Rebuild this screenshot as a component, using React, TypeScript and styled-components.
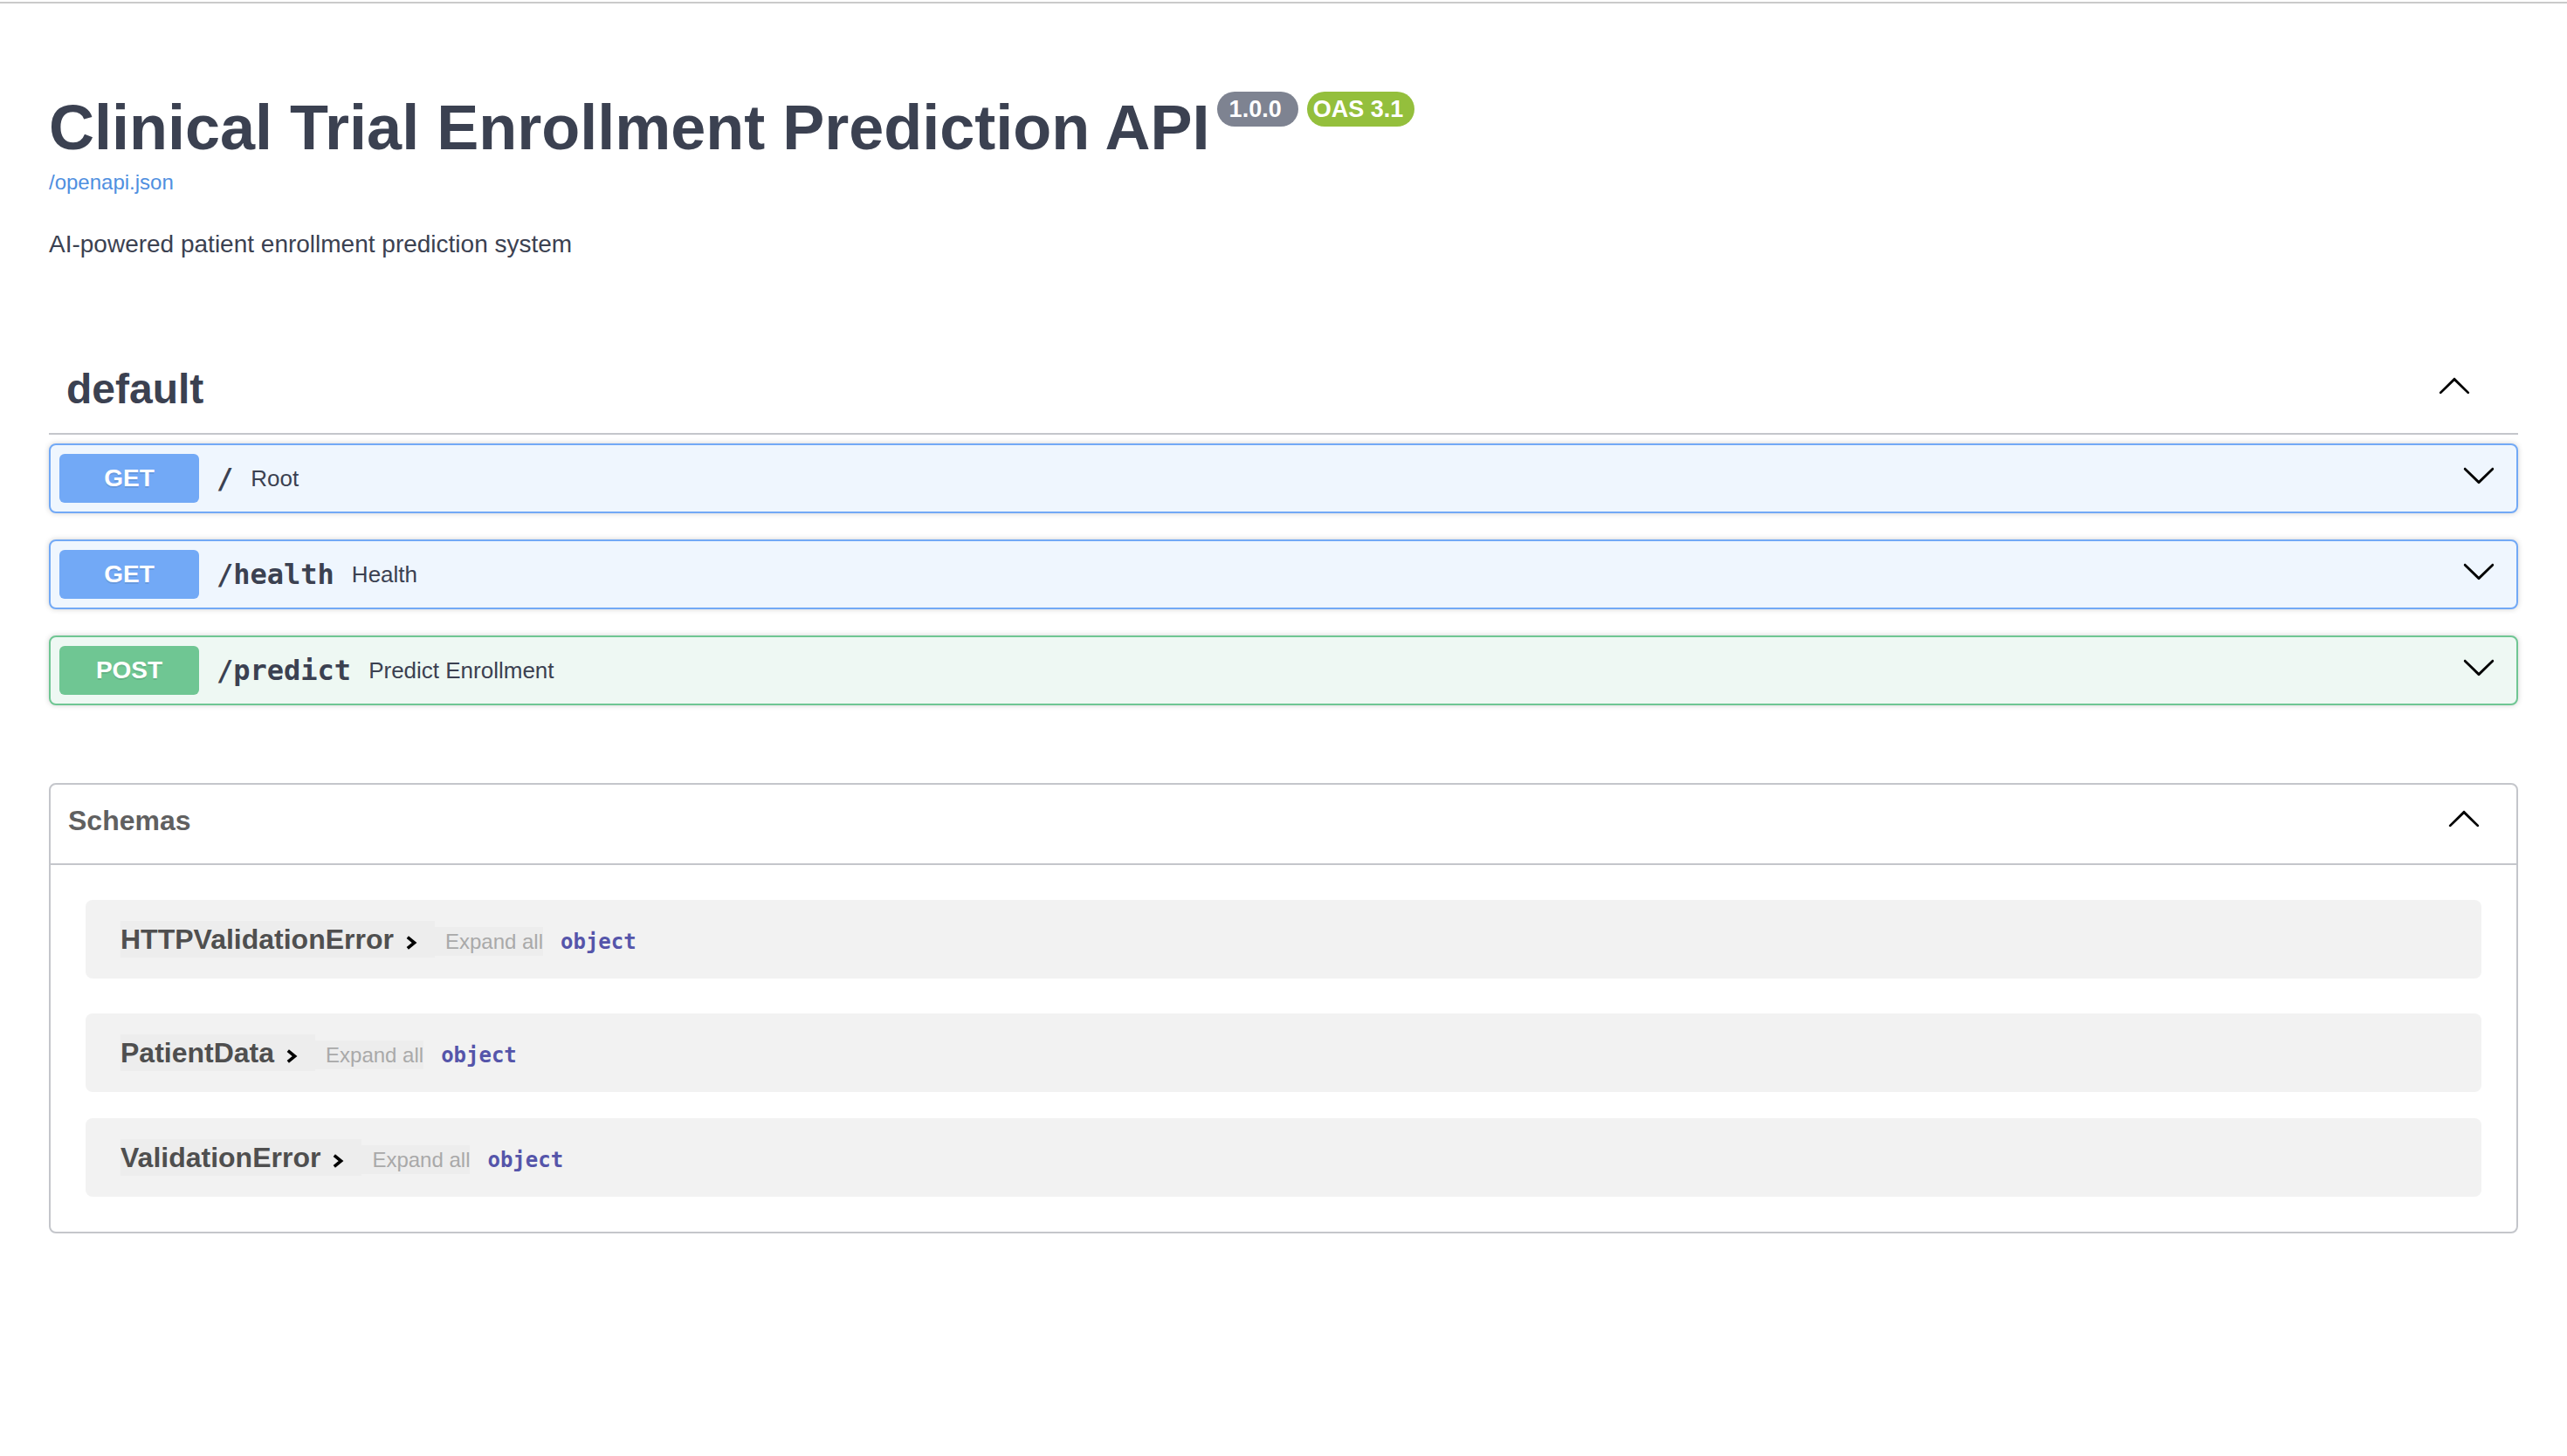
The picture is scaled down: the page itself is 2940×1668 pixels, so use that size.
import React from "react";
import styled, { createGlobalStyle } from "styled-components";

const SANS = `"Liberation Sans", Arial, Helvetica, sans-serif`;
const MONO = `"DejaVu Sans Mono", "Liberation Mono", monospace`;

const GlobalStyle = createGlobalStyle`
  html, body { margin: 0; padding: 0; background: #ffffff; }
  body { font-family: ${SANS}; color: #3b4151; }
  *, *::before, *::after { box-sizing: border-box; }
`;

type Method = "get" | "post";

const methodColors: Record<Method, { main: string; bg: string }> = {
  get: { main: "#72a9f6", bg: "#eff6fe" },
  post: { main: "#6fc693", bg: "#eef8f3" },
};

const TopRule = styled.div`
  margin-top: 2px;
  height: 2px;
  background: #cacaca;
`;

const Wrapper = styled.main`
  padding: 0 56px 200px;
`;

const Info = styled.header`
  margin-top: 106px;
`;

const TitleRow = styled.div`
  display: flex;
  align-items: flex-start;
`;

const Title = styled.h1`
  margin: 0;
  font: bold 72px/72px ${SANS};
  color: #3b4151;
  white-space: nowrap;
`;

const Badge = styled.span<{ $tone: "version" | "oas" }>`
  display: inline-block;
  margin-top: -5px;
  margin-left: ${(p) => (p.$tone === "version" ? "8px" : "10px")};
  height: 40px;
  padding: ${(p) => (p.$tone === "version" ? "0 19px 0 14px" : "0 13px 0 7px")};
  border-radius: 20px;
  background: ${(p) => (p.$tone === "version" ? "#7e8391" : "#94bf3c")};
  color: #ffffff;
  font: bold 27px/40px ${SANS};
  white-space: nowrap;
`;

const SpecLink = styled.a`
  display: block;
  margin-top: 13px;
  font: 24px/28px ${SANS};
  color: #4f8fe0;
  text-decoration: none;
  width: max-content;
`;

const Description = styled.p`
  margin: 37px 0 0;
  font: 28px/40px ${SANS};
  color: #3b4151;
`;

const TagSection = styled.section`
  margin-top: 108px;
`;

const TagHeader = styled.div`
  display: flex;
  align-items: flex-start;
  padding: 10px 53px 22px 20px;
  border-bottom: 2px solid #c4c6cb;
  margin-bottom: 10px;
`;

const TagTitle = styled.h2`
  flex: 1;
  margin: 0;
  font: bold 48px/56px ${SANS};
  color: #3b4151;
`;

const ArrowIcon = styled.svg<{ $offset: number }>`
  flex-shrink: 0;
  width: 40px;
  height: 40px;
  margin-top: ${(p) => p.$offset}px;
`;

const OpBlock = styled.div<{ $method: Method }>`
  display: flex;
  align-items: center;
  height: 80px;
  padding: 0 23px 0 10px;
  margin-bottom: 30px;
  border: 2px solid ${(p) => methodColors[p.$method].main};
  border-radius: 8px;
  background: ${(p) => methodColors[p.$method].bg};
  box-shadow: 0 0 6px rgba(0, 0, 0, 0.19);
  &:last-child {
    margin-bottom: 0;
  }
`;

const MethodTag = styled.span<{ $method: Method }>`
  flex-shrink: 0;
  width: 160px;
  height: 56px;
  border-radius: 6px;
  background: ${(p) => methodColors[p.$method].main};
  color: #ffffff;
  font: bold 28px/56px ${SANS};
  text-align: center;
  text-shadow: 0 2px 0 rgba(0, 0, 0, 0.1);
`;

const OpPath = styled.span`
  padding: 0 20px;
  font: bold 32px/40px ${MONO};
  color: #3b4151;
  white-space: nowrap;
`;

const OpSummary = styled.span`
  flex: 1;
  font: 26px/40px ${SANS};
  color: #3b4151;
`;

const OpArrow = styled.svg`
  flex-shrink: 0;
  width: 40px;
  height: 40px;
  margin-bottom: 9px;
`;

const Models = styled.section`
  margin-top: 89px;
  border: 2px solid #c4c6cb;
  border-radius: 8px;
`;

const ModelsHeader = styled.div`
  display: flex;
  align-items: flex-start;
  padding: 21px 40px 29px 20px;
  border-bottom: 2px solid #c4c6cb;
`;

const ModelsTitle = styled.h4`
  flex: 1;
  margin: 0;
  font: bold 32px/40px ${SANS};
  color: #606060;
`;

const ModelList = styled.div`
  padding: 40px;
`;

const ModelContainer = styled.div<{ $first?: boolean }>`
  display: flex;
  align-items: baseline;
  padding: 24px 40px;
  margin-bottom: ${(p) => (p.$first ? "40px" : "30px")};
  border-radius: 8px;
  background: #f2f2f2;
  &:last-child {
    margin-bottom: 0;
  }
`;

const ModelTitleButton = styled.button`
  display: inline-flex;
  align-items: flex-start;
  height: 42px;
  padding: 0;
  border: none;
  background: #ededed;
  font: bold 32px/42px ${SANS};
  color: #4f4f4f;
  cursor: pointer;
`;

const ModelChevron = styled.svg`
  flex-shrink: 0;
  width: 12px;
  height: 16px;
  margin: 17px 21px 0 14px;
  overflow: visible;
`;

const ExpandButton = styled.button`
  height: 33px;
  padding: 0 0 0 12px;
  border: none;
  background: #ededed;
  font: 24px/33px ${SANS};
  color: #a9a9a9;
  cursor: pointer;
`;

const TypeLabel = styled.span`
  margin-left: 20px;
  font: bold 24px/33px ${MONO};
  color: #5555aa;
`;

const DOWN_PATH =
  "M17.418 6.109c.272-.268.709-.268.979 0s.271.701 0 .969l-7.908 7.83c-.27.268-.707.268-.979 0l-7.908-7.83c-.27-.268-.27-.701 0-.969.271-.268.709-.268.979 0L10 13.25l7.418-7.141z";
const UP_PATH =
  "M17.418 14.908c.272.268.709.268.979 0s.271-.701 0-.969l-7.908-7.83c-.27-.268-.707-.268-.979 0l-7.908 7.83c-.27.268-.27.701 0 .969.271.268.709.268.979 0L10 7.767l7.418 7.141z";

const operations: { method: Method; label: string; path: string; summary: string }[] = [
  { method: "get", label: "GET", path: "/", summary: "Root" },
  { method: "get", label: "GET", path: "/health", summary: "Health" },
  { method: "post", label: "POST", path: "/predict", summary: "Predict Enrollment" },
];

const schemas = ["HTTPValidationError", "PatientData", "ValidationError"];

export default function App() {
  return (
    <>
      <GlobalStyle />
      <TopRule />
      <Wrapper>
        <Info>
          <TitleRow>
            <Title>Clinical Trial Enrollment Prediction API</Title>
            <Badge $tone="version">1.0.0</Badge>
            <Badge $tone="oas">OAS 3.1</Badge>
          </TitleRow>
          <SpecLink href="#">/openapi.json</SpecLink>
          <Description>AI-powered patient enrollment prediction system</Description>
        </Info>

        <TagSection>
          <TagHeader>
            <TagTitle>default</TagTitle>
            <ArrowIcon $offset={3} viewBox="0 0 20 20" aria-hidden>
              <path d={UP_PATH} fill="#000" />
            </ArrowIcon>
          </TagHeader>
          <div>
            {operations.map((op) => (
              <OpBlock key={op.path} $method={op.method}>
                <MethodTag $method={op.method}>{op.label}</MethodTag>
                <OpPath>{op.path}</OpPath>
                <OpSummary>{op.summary}</OpSummary>
                <OpArrow viewBox="0 0 20 20" aria-hidden>
                  <path d={DOWN_PATH} fill="#000" />
                </OpArrow>
              </OpBlock>
            ))}
          </div>
        </TagSection>

        <Models>
          <ModelsHeader>
            <ModelsTitle>Schemas</ModelsTitle>
            <ArrowIcon $offset={-3} viewBox="0 0 20 20" aria-hidden>
              <path d={UP_PATH} fill="#000" />
            </ArrowIcon>
          </ModelsHeader>
          <ModelList>
            {schemas.map((name, i) => (
              <ModelContainer key={name} $first={i === 0}>
                <ModelTitleButton>
                  <span>{name}</span>
                  <ModelChevron viewBox="0 0 12 16" aria-hidden>
                    <polyline
                      points="1.8,1.6 9.6,8 1.8,14.4"
                      fill="none"
                      stroke="#000"
                      strokeWidth="3.6"
                    />
                  </ModelChevron>
                </ModelTitleButton>
                <ExpandButton>Expand all</ExpandButton>
                <TypeLabel>object</TypeLabel>
              </ModelContainer>
            ))}
          </ModelList>
        </Models>
      </Wrapper>
    </>
  );
}
